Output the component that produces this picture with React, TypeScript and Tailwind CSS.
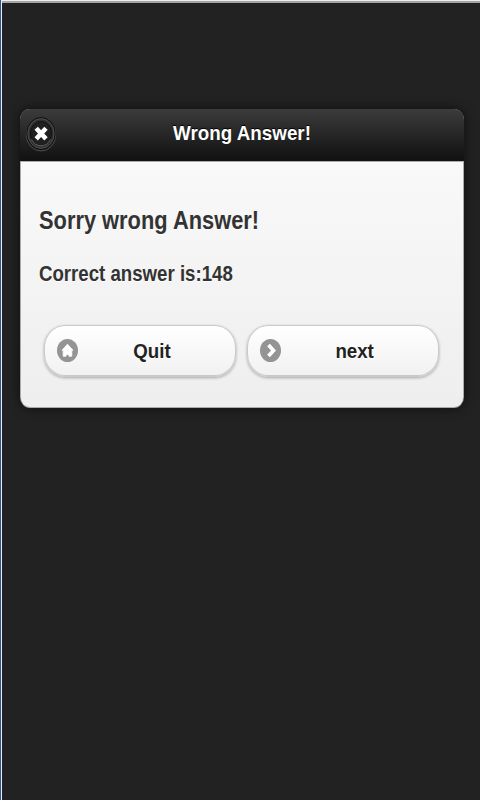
import type { ReactNode } from 'react';

function DialogButton({ label, icon }: { label: string; icon: ReactNode }) {
  return (
    <button className="flex h-[52px] w-[192px] items-center rounded-[21px/22px] border border-[#cacaca] bg-linear-to-b from-white to-[#f1f1f1] pb-px pl-3 text-[21px] font-bold text-[#222222] shadow-[0_1px_3px_rgba(0,0,0,0.3),inset_0_-1px_0_#c8c8c8]">
      {icon}
      <span className="ml-[28px] w-[92px] text-center leading-6 [text-shadow:0_1px_0_#fff]">
        <span className="inline-block scale-x-[0.89]">{label}</span>
      </span>
    </button>
  );
}

function HomeIcon() {
  return (
    <svg className="h-[23px] w-[21px] shrink-0" viewBox="0 0 21 23">
      <ellipse cx="10.5" cy="11.5" rx="10.5" ry="11.5" fill="#949494" />
      <path d="M10.5 5.2 16 11.3H14.8V17.2H11.9V15.4H9.1V17.2H6.2V11.3H5Z" fill="white" stroke="white" strokeWidth=".8" strokeLinejoin="round" />
    </svg>
  );
}

function ArrowIcon() {
  return (
    <svg className="h-[23px] w-[21px] shrink-0" viewBox="0 0 21 23">
      <ellipse cx="10.5" cy="11.5" rx="10.5" ry="11.5" fill="#949494" />
      <path d="M8.5 6 13.5 11.5 8.5 17" fill="none" stroke="white" strokeWidth="3.7" />
    </svg>
  );
}

function CloseButton() {
  return (
    <button className="h-9 w-8 shrink-0 -translate-y-px" aria-label="Close">
      <svg className="h-9 w-8" viewBox="0 0 32 36">
        <ellipse cx="16" cy="18.8" rx="14.7" ry="16.2" fill="none" stroke="#505050" />
        <ellipse cx="16" cy="17.5" rx="14.2" ry="16" fill="#303030" stroke="#101010" />
        <ellipse cx="16" cy="17.5" rx="13" ry="14.8" fill="none" stroke="#4b4b4b" />
        <ellipse cx="16" cy="17.5" rx="10.7" ry="12" fill="#202020" stroke="#121212" />
        <path d="M6.5 23.5Q10 29.8 16 29.8T25.5 23.5" fill="none" stroke="#626262" />
        <path d="M11.2 12.3 21 22.9M21 12.3 11.2 22.9" stroke="white" strokeWidth="4.6" />
      </svg>
    </button>
  );
}

export default function App() {
  return (
    <main className="h-[800px] w-[480px] overflow-hidden border-l border-[#315496] bg-[#222222] font-['Liberation_Sans',Arial,sans-serif]">
      <div className="h-full border-l border-t border-[#eeeeee]">
        <div className="h-full border-t-2 border-[#a5a5a5] pl-[18px] pt-[106px]">
          <section className="h-[299px] w-[444px] overflow-hidden rounded-[10px/11px] bg-[#ababab] shadow-[0_0_12px_rgba(0,0,0,0.6)]">
            <header className="flex h-[52px] items-center bg-linear-to-b from-[#3c3c3c] to-[#111111] pl-[5px]">
              <CloseButton />
              <h1 className="ml-[91px] w-[188px] -translate-y-0.5 text-center text-[21px] leading-7 font-bold whitespace-nowrap text-white [text-shadow:0_-1px_1px_#000]">
                <span className="inline-block origin-center scale-x-[0.895]">Wrong Answer!</span>
              </h1>
            </header>
            <div className="mx-px mt-px h-[245px] rounded-b-[9px] bg-linear-to-b from-[#f9f9f9] to-[#eeeeee] pt-[43px] text-[#333333] [text-shadow:0_1px_0_#fff]">
              <h2 className="ml-[18px] origin-left scale-x-[0.84] text-[26px] leading-[30px] font-bold whitespace-nowrap">Sorry wrong Answer!</h2>
              <h3 className="mt-[27px] ml-[18px] origin-left scale-x-[0.867] text-[21.5px] leading-6 font-bold whitespace-nowrap">Correct answer is:148</h3>
              <div className="mt-[39px] ml-[23px] flex gap-[11px]">
                <DialogButton label="Quit" icon={<HomeIcon />} />
                <DialogButton label="next" icon={<ArrowIcon />} />
              </div>
            </div>
          </section>
        </div>
      </div>
    </main>
  );
}
